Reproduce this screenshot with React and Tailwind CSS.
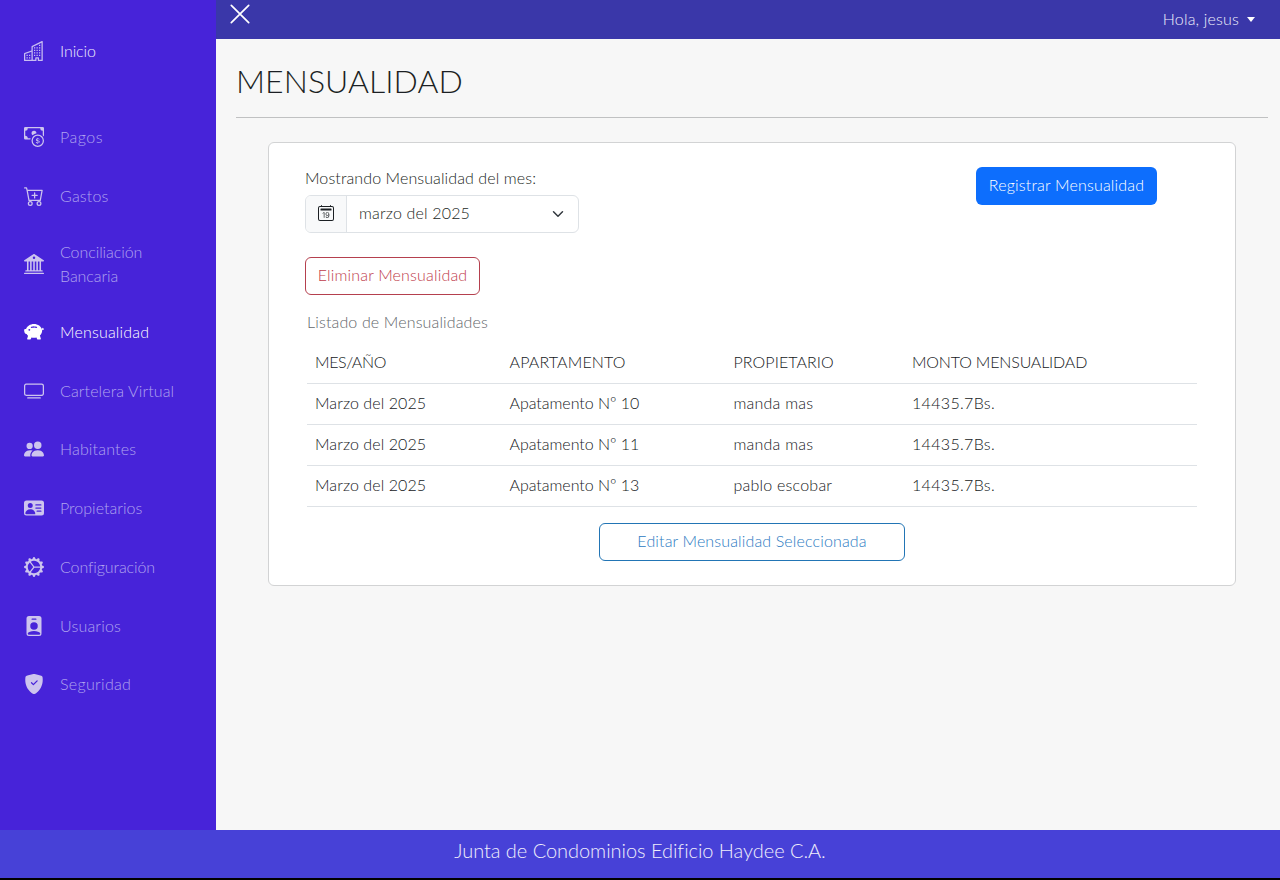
import React from "react";
import {
  BsBuildings,
  BsCashCoin,
  BsCartPlus,
  BsBank2,
  BsPiggyBankFill,
  BsTv,
  BsPeopleFill,
  BsPersonVcardFill,
  BsGearWideConnected,
  BsPersonBadgeFill,
  BsShieldFillCheck,
  BsCalendar2Date,
} from "react-icons/bs";

const navItems = [
  { label: "Pagos", icon: BsCashCoin, track: "tracking-[0.5px]" },
  { label: "Gastos", icon: BsCartPlus, track: "tracking-[0.2px]" },
  { label: "Conciliación Bancaria", icon: BsBank2, tall: true, track: "tracking-[-0.07px]" },
  { label: "Mensualidad", icon: BsPiggyBankFill, active: true, track: "tracking-[0.18px]" },
  { label: "Cartelera Virtual", icon: BsTv, track: "tracking-[0.12px]" },
  { label: "Habitantes", icon: BsPeopleFill, track: "tracking-[0.17px]" },
  { label: "Propietarios", icon: BsPersonVcardFill, track: "tracking-[0.02px]" },
  { label: "Configuración", icon: BsGearWideConnected, track: "tracking-[-0.1px]" },
  { label: "Usuarios", icon: BsPersonBadgeFill, track: "tracking-[0.2px]" },
  { label: "Seguridad", icon: BsShieldFillCheck, track: "tracking-[0.32px]" },
];

const rows = [
  ["Marzo del 2025", "Apatamento Nº 10", "manda mas", "14435.7Bs."],
  ["Marzo del 2025", "Apatamento Nº 11", "manda mas", "14435.7Bs."],
  ["Marzo del 2025", "Apatamento Nº 13", "pablo escobar", "14435.7Bs."],
];

function NavItem({ label, icon: Icon, active, tall, track }) {
  return (
    <a
      className={`flex shrink-0 items-center gap-4 pl-6 pr-10 ${tall ? "h-[77.4px]" : "h-[58.7px]"} ${
        active ? "text-white" : "text-[#b0a4ef]"
      }`}
    >
      <Icon className={`size-5 shrink-0 ${active ? "text-white" : "text-[#cdc4ee]"}`} />
      <span className={track}>{label}</span>
    </a>
  );
}

function Sidebar() {
  return (
    <nav className="flex w-[216px] shrink-0 flex-col bg-[#4723d9] pt-[22px]">
      <a className="mb-[27.3px] flex h-[58.7px] shrink-0 items-center gap-4 pl-6 text-[#efecfc]">
        <BsBuildings className="size-5 shrink-0 text-[#c8bdf2]" />
        <span className="tracking-[-0.1px]">Inicio</span>
      </a>
      {navItems.map((item) => (
        <NavItem key={item.label} {...item} />
      ))}
    </nav>
  );
}

function TopBar() {
  return (
    <header className="flex h-[39px] shrink-0 items-start justify-between bg-[#3a37a9] pl-[14px] pr-[25px] text-white">
      <svg viewBox="0 0 20 20" className="mt-[4px] size-5 fill-none stroke-white stroke-[1.7]">
        <path d="M1.3 1.3 18.7 18.7M18.7 1.3 1.3 18.7" strokeLinecap="round" />
      </svg>
      <div className="flex h-[38px] items-center gap-[8px] text-[#efeefb]">
        <span className="tracking-[0.18px]">Hola, jesus</span>
        <span className="border-x-[4.5px] border-t-[5px] border-x-transparent border-t-white" />
      </div>
    </header>
  );
}

function MonthTable() {
  return (
    <section className="mx-[2px] flex flex-col text-[#15181b]">
      <p className="h-10 pt-[7px] leading-6 tracking-[0.14px] text-[#63676b]">Listado de Mensualidades</p>
      <div className="grid h-[41px] grid-cols-[194.5px_224px_178.5px_1fr] items-center border-b border-[#dee2e6] px-2 pb-[2px]">
        <span className="tracking-[-0.4px]">MES/AÑO</span>
        <span className="tracking-[0.15px]">APARTAMENTO</span>
        <span className="tracking-[0.08px]">PROPIETARIO</span>
        <span className="tracking-[-0.17px]">MONTO MENSUALIDAD</span>
      </div>
      {rows.map((row) => (
        <div
          key={row[1]}
          className="grid h-[41px] grid-cols-[194.5px_224px_178.5px_1fr] items-center border-b border-[#dee2e6] px-2 pb-[2px]"
        >
          <span className="tracking-[0.08px]">{row[0]}</span>
          <span className="tracking-[-0.03px]">{row[1]}</span>
          <span className="tracking-[0.22px]">{row[2]}</span>
          <span className="tracking-[0.33px]">{row[3]}</span>
        </div>
      ))}
    </section>
  );
}

export default function App() {
  return (
    <div className="flex h-[880px] w-[1280px] flex-col overflow-hidden bg-black font-['Lato','Open_Sans',sans-serif] text-base font-light">
      <div className="flex h-[830px]">
        <Sidebar />
        <div className="flex flex-1 flex-col bg-[#f7f7f7]">
          <TopBar />
          <main className="flex flex-col pl-5 pr-3 pt-[23px] text-[#1b1f23]">
            <h1 className="h-[55px] text-[32px] leading-[38px] tracking-[0.05px]">MENSUALIDAD</h1>
            <hr className="border-[#c0c1c2]" />
            <div className="mx-8 mt-6 flex h-[444px] flex-col rounded-md border border-[#d2d3d4] bg-white px-9 pt-6">
              <div className="flex items-start justify-between">
                <div className="flex w-[274px] flex-col">
                  <label className="mb-[5px] h-[23px] leading-[22px] tracking-[0.1px]">Mostrando Mensualidad del mes:</label>
                  <div className="flex h-[38px] overflow-hidden rounded-md border border-[#dee2e6]">
                    <span className="flex w-[41px] items-center justify-center border-r border-[#dee2e6] bg-[#f8f9fa] pb-[2px]">
                      <BsCalendar2Date className="size-4" />
                    </span>
                    <span className="flex flex-1 items-center justify-between pl-3 pr-[14px]">
                      <span className="pb-[2px] tracking-[0.17px]">marzo del 2025</span>
                      <svg viewBox="0 0 16 16" className="size-3 fill-none stroke-[#343a40] stroke-2">
                        <path d="m2 5 6 6 6-6" strokeLinecap="round" strokeLinejoin="round" />
                      </svg>
                    </span>
                  </div>
                </div>
                <button className="mr-[42px] h-[38px] w-[181px] rounded-md bg-[#0d6efd] pb-[2px] tracking-[0.18px] text-white">
                  Registrar Mensualidad
                </button>
              </div>
              <button className="mb-2 mt-6 h-[38px] w-[175px] rounded-md border border-[#b5404e] pb-[2px] tracking-[0.18px] text-[#c03c4b]">
                Eliminar Mensualidad
              </button>
              <MonthTable />
              <button className="mt-4 h-[38px] w-[306px] self-center rounded-md border border-[#2275b5] pb-[2px] tracking-[0.14px] text-[#2b7ac2]">
                Editar Mensualidad Seleccionada
              </button>
            </div>
          </main>
        </div>
      </div>
      <footer className="flex h-12 items-center justify-center bg-[#4741d7] pb-[8px] text-xl tracking-[-0.04px] text-[#efeefb]">
        Junta de Condominios Edificio Haydee C.A.
      </footer>
    </div>
  );
}
